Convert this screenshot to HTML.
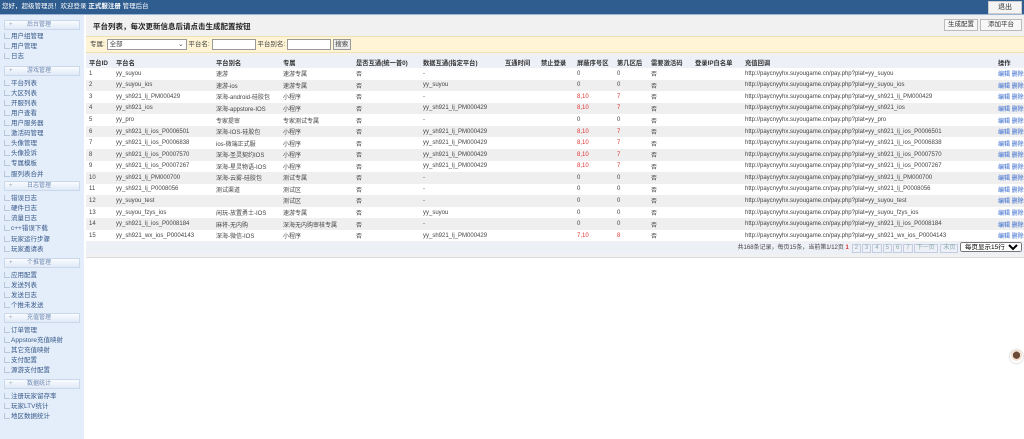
<!DOCTYPE html>
<html><head><meta charset="utf-8"><style>
*{margin:0;padding:0;box-sizing:border-box}
body{width:1024px;height:439px;overflow:hidden;background:#fff;font-family:"Liberation Sans","Noto Sans CJK SC",sans-serif;font-size:6.5px;color:#333;position:relative}
#top{position:absolute;left:0;top:0;width:1024px;height:15px;background:#2f5d8f;border-bottom:1px solid #9cb6d6;color:#fff;font-size:6.5px;line-height:14px;padding-left:2px}
#top b{font-weight:bold}
#logout{position:absolute;right:2px;top:1px;width:34px;height:13px;background:#f4f4f4;border:1px solid #ccc;color:#333;text-align:center;line-height:11px;font-size:7px}
#side{position:absolute;left:0;top:15px;width:84px;height:424px;background:#e3eefa}
.sh{position:absolute;left:4px;width:76px;height:10px;background:linear-gradient(#fafcff,#dfe9f6);border:1px solid #c9d8ea;color:#6b86b0;font-size:6px;line-height:8px;padding-left:22px}
.sh:before{content:"+";position:absolute;left:4px;color:#9ab}
.it{position:absolute;left:4px;font-size:6.5px;color:#3a5a8a;line-height:9px}
.it:before{content:"";display:inline-block;width:5px;height:5px;border:1px solid #b8c8dc;margin-right:1px;vertical-align:-1px;border-right:none;border-top:none}
#main{position:absolute;left:86px;top:15px;width:938px;height:243px;background:#f1f1f1;border-bottom:1px solid #ddd}
#title{position:absolute;left:7px;top:6px;font-size:7.5px;font-weight:bold;color:#222}
.btn{position:absolute;top:4px;height:12px;background:#f7f7f7;border:1px solid #bbb;font-size:6.5px;line-height:10px;text-align:center;color:#333}
#search{position:absolute;left:0;top:21px;width:938px;height:17px;background:#fff5d6;border-top:1px solid #eee0b0;border-bottom:1px solid #eee0b0;font-size:6.5px;line-height:15px;padding-left:4px;color:#444}
.inp{display:inline-block;height:11px;background:#fff;border:1px solid #999;vertical-align:middle}
table{position:absolute;left:0;top:41px;width:938px;border-collapse:collapse;table-layout:fixed}
td,th{height:11.57px;padding:0 0 0 3px;white-space:nowrap;overflow:hidden;font-weight:normal;text-align:left;font-size:6px;color:#444}
th{height:12px;background:#eef0f8;font-weight:bold;color:#333;font-size:6.3px}
tr:nth-child(even) td{background:#fff}
tr:nth-child(odd) td{background:#efefef}
.r{color:#d33}
.op{color:#3366cc}
#pg{position:absolute;left:0;top:227px;width:938px;height:12px;background:#eef0f8;font-size:6px;line-height:12px;text-align:right;padding-right:2px;color:#444}
#pg span{display:inline-block;border:1px solid #c5cde0;padding:0 2px;line-height:7px;margin-left:1px;color:#8aa}
#pg select{font-size:6.5px;height:10px;vertical-align:middle}
</style></head><body>
<div id="top">您好，超级管理员！欢迎登录 <b>正式服注册</b> 管理后台<div id="logout">退出</div></div>
<div id="side">
<div class="sh" style="top:5px">后台管理</div>
<div class="it" style="top:17px">用户组管理</div>
<div class="it" style="top:27px">用户管理</div>
<div class="it" style="top:37px">日志</div>
<div class="sh" style="top:51px">游戏管理</div>
<div class="it" style="top:64px">平台列表</div>
<div class="it" style="top:74px">大区列表</div>
<div class="it" style="top:84px">开服列表</div>
<div class="it" style="top:94px">用户查看</div>
<div class="it" style="top:104px">用户服务器</div>
<div class="it" style="top:114px">激活码管理</div>
<div class="it" style="top:124px">头像管理</div>
<div class="it" style="top:134px">头像投诉</div>
<div class="it" style="top:144px">专属模板</div>
<div class="it" style="top:155px">服列表合并</div>
<div class="sh" style="top:166px">日志管理</div>
<div class="it" style="top:179px">错误日志</div>
<div class="it" style="top:189px">硬件日志</div>
<div class="it" style="top:199px">流量日志</div>
<div class="it" style="top:209px">c++错误下载</div>
<div class="it" style="top:220px">玩家运行步骤</div>
<div class="it" style="top:230px">玩家邀请表</div>
<div class="sh" style="top:243px">个推管理</div>
<div class="it" style="top:256px">应用配置</div>
<div class="it" style="top:266px">发送列表</div>
<div class="it" style="top:276px">发送日志</div>
<div class="it" style="top:286px">个推未发送</div>
<div class="sh" style="top:298px">充值管理</div>
<div class="it" style="top:311px">订单管理</div>
<div class="it" style="top:321px">Appstore充值映射</div>
<div class="it" style="top:331px">其它充值映射</div>
<div class="it" style="top:341px">支付配置</div>
<div class="it" style="top:351px">源游支付配置</div>
<div class="sh" style="top:364px">数据统计</div>
<div class="it" style="top:377px">注册玩家留存率</div>
<div class="it" style="top:387px">玩家LTV统计</div>
<div class="it" style="top:397px">地区数据统计</div>
</div>
<div id="main">
<div id="title">平台列表，每次更新信息后请点击生成配置按钮</div>
<div class="btn" style="left:858px;width:34px">生成配置</div>
<div class="btn" style="left:894px;width:42px">添加平台</div>
<div id="search">专属: <span class="inp" style="width:80px;font-size:6.5px;line-height:9px;padding-left:2px">全部<span style="float:right;padding-right:2px">⌄</span></span> 平台名: <span class="inp" style="width:44px"></span> 平台别名: <span class="inp" style="width:44px"></span> <span class="inp" style="width:18px;background:#eee;text-align:center;line-height:9px">搜索</span></div>
<table>
<colgroup><col style="width:27px"><col style="width:100px"><col style="width:67px"><col style="width:73px"><col style="width:67px"><col style="width:82px"><col style="width:36px"><col style="width:36px"><col style="width:40px"><col style="width:34px"><col style="width:44px"><col style="width:50px"><col style="width:253px"><col style="width:29px"></colgroup>
<tr><th>平台ID</th><th>平台名</th><th>平台别名</th><th>专属</th><th>是否互通(统一普0)</th><th>数据互通(指定平台)</th><th>互通时间</th><th>禁止登录</th><th>屏蔽序号区</th><th>第几区后</th><th>需要激活码</th><th>登录IP白名单</th><th>充值回调</th><th>操作</th></tr>
<tr><td>1</td><td>yy_suyou</td><td>速游</td><td>速游专属</td><td>否</td><td>-</td><td></td><td></td><td>0</td><td>0</td><td>否</td><td></td><td>http://paycnyyhx.suyougame.cn/pay.php?plat=yy_suyou</td><td class="op">编辑 删除</td></tr>
<tr><td>2</td><td>yy_suyou_ios</td><td>速游-ios</td><td>速游专属</td><td>否</td><td>yy_suyou</td><td></td><td></td><td>0</td><td>0</td><td>否</td><td></td><td>http://paycnyyhx.suyougame.cn/pay.php?plat=yy_suyou_ios</td><td class="op">编辑 删除</td></tr>
<tr><td>3</td><td>yy_sh921_lj_PM000429</td><td>深海-android-硅胶包</td><td>小程序</td><td>否</td><td>-</td><td></td><td></td><td class="r">8,10</td><td class="r">7</td><td>否</td><td></td><td>http://paycnyyhx.suyougame.cn/pay.php?plat=yy_sh921_lj_PM000429</td><td class="op">编辑 删除</td></tr>
<tr><td>4</td><td>yy_sh921_ios</td><td>深海-appstore-IOS</td><td>小程序</td><td>否</td><td>yy_sh921_lj_PM000429</td><td></td><td></td><td class="r">8,10</td><td class="r">7</td><td>否</td><td></td><td>http://paycnyyhx.suyougame.cn/pay.php?plat=yy_sh921_ios</td><td class="op">编辑 删除</td></tr>
<tr><td>5</td><td>yy_pro</td><td>专家提审</td><td>专家测试专属</td><td>否</td><td>-</td><td></td><td></td><td>0</td><td>0</td><td>否</td><td></td><td>http://paycnyyhx.suyougame.cn/pay.php?plat=yy_pro</td><td class="op">编辑 删除</td></tr>
<tr><td>6</td><td>yy_sh921_lj_ios_P0006501</td><td>深海-IOS-硅胶包</td><td>小程序</td><td>否</td><td>yy_sh921_lj_PM000429</td><td></td><td></td><td class="r">8,10</td><td class="r">7</td><td>否</td><td></td><td>http://paycnyyhx.suyougame.cn/pay.php?plat=yy_sh921_lj_ios_P0006501</td><td class="op">编辑 删除</td></tr>
<tr><td>7</td><td>yy_sh921_lj_ios_P0006838</td><td>ios-微端正式服</td><td>小程序</td><td>否</td><td>yy_sh921_lj_PM000429</td><td></td><td></td><td class="r">8,10</td><td class="r">7</td><td>否</td><td></td><td>http://paycnyyhx.suyougame.cn/pay.php?plat=yy_sh921_lj_ios_P0006838</td><td class="op">编辑 删除</td></tr>
<tr><td>8</td><td>yy_sh921_lj_ios_P0007570</td><td>深海-圣灵契约IOS</td><td>小程序</td><td>否</td><td>yy_sh921_lj_PM000429</td><td></td><td></td><td class="r">8,10</td><td class="r">7</td><td>否</td><td></td><td>http://paycnyyhx.suyougame.cn/pay.php?plat=yy_sh921_lj_ios_P0007570</td><td class="op">编辑 删除</td></tr>
<tr><td>9</td><td>yy_sh921_lj_ios_P0007267</td><td>深海-星灵物语-IOS</td><td>小程序</td><td>否</td><td>yy_sh921_lj_PM000429</td><td></td><td></td><td class="r">8,10</td><td class="r">7</td><td>否</td><td></td><td>http://paycnyyhx.suyougame.cn/pay.php?plat=yy_sh921_lj_ios_P0007267</td><td class="op">编辑 删除</td></tr>
<tr><td>10</td><td>yy_sh921_lj_PM000700</td><td>深海-云雾-硅胶包</td><td>测试专属</td><td>否</td><td>-</td><td></td><td></td><td>0</td><td>0</td><td>否</td><td></td><td>http://paycnyyhx.suyougame.cn/pay.php?plat=yy_sh921_lj_PM000700</td><td class="op">编辑 删除</td></tr>
<tr><td>11</td><td>yy_sh921_lj_P0008056</td><td>测试渠道</td><td>测试区</td><td>否</td><td>-</td><td></td><td></td><td>0</td><td>0</td><td>否</td><td></td><td>http://paycnyyhx.suyougame.cn/pay.php?plat=yy_sh921_lj_P0008056</td><td class="op">编辑 删除</td></tr>
<tr><td>12</td><td>yy_suyou_test</td><td></td><td>测试区</td><td>否</td><td>-</td><td></td><td></td><td>0</td><td>0</td><td>否</td><td></td><td>http://paycnyyhx.suyougame.cn/pay.php?plat=yy_suyou_test</td><td class="op">编辑 删除</td></tr>
<tr><td>13</td><td>yy_suyou_fzys_ios</td><td>闲玩-放置勇士-IOS</td><td>速游专属</td><td>否</td><td>yy_suyou</td><td></td><td></td><td>0</td><td>0</td><td>否</td><td></td><td>http://paycnyyhx.suyougame.cn/pay.php?plat=yy_suyou_fzys_ios</td><td class="op">编辑 删除</td></tr>
<tr><td>14</td><td>yy_sh921_lj_ios_P0008184</td><td>麻将-无内购</td><td>深海无内购审核专属</td><td>否</td><td>-</td><td></td><td></td><td>0</td><td>0</td><td>否</td><td></td><td>http://paycnyyhx.suyougame.cn/pay.php?plat=yy_sh921_lj_ios_P0008184</td><td class="op">编辑 删除</td></tr>
<tr><td>15</td><td>yy_sh921_wx_ios_P0004143</td><td>深海-微信-IOS</td><td>小程序</td><td>否</td><td>yy_sh921_lj_PM000429</td><td></td><td></td><td class="r">7,10</td><td class="r">8</td><td>否</td><td></td><td>http://paycnyyhx.suyougame.cn/pay.php?plat=yy_sh921_wx_ios_P0004143</td><td class="op">编辑 删除</td></tr>
</table>
<div id="pg">共168条记录，每页15条，当前第1/12页 <b style="color:#d33">1</b> <span>2</span><span>3</span><span>4</span><span>5</span><span>6</span><span>7</span><span>下一页</span> <span>末页</span> <select><option>每页显示15行</option></select></div>
</div>
<div style="position:absolute;left:1010px;top:350px;width:13px;height:13px;border-radius:50%;background:radial-gradient(circle at 50% 40%,#6b4a3a 0 35%,#f3e0d0 36% 55%,#fff 56%);box-shadow:0 0 2px #aaa"></div>
</body></html>
